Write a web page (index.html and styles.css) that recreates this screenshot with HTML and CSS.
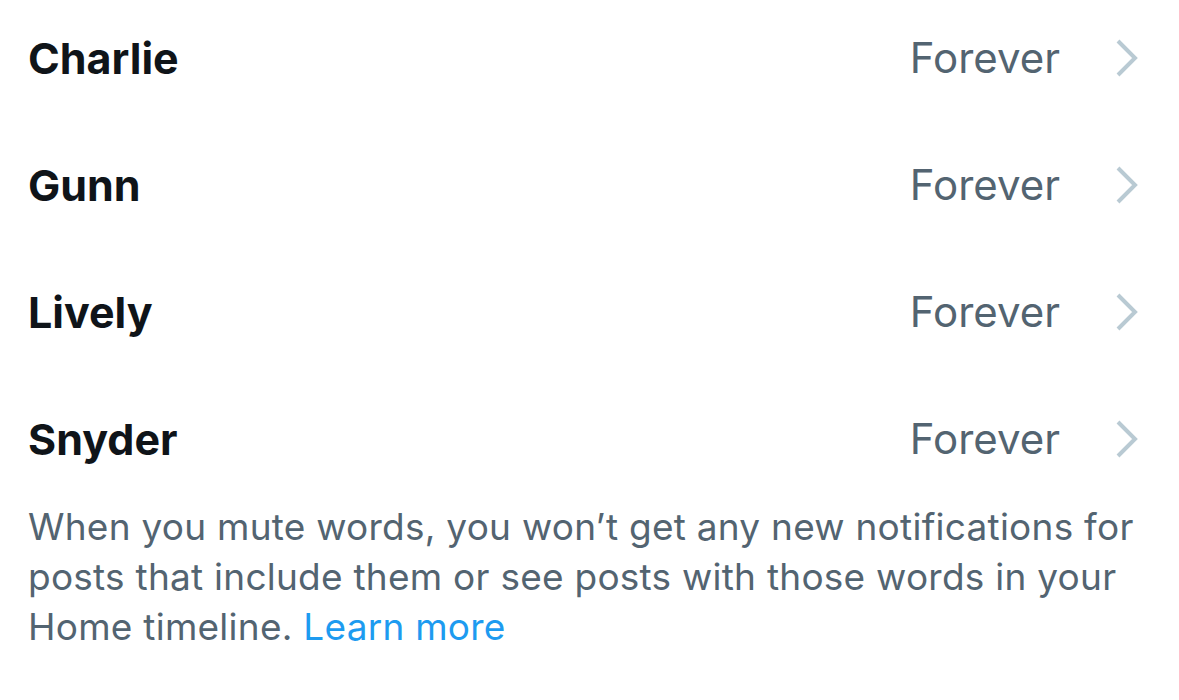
FILE: index.html
```html
<!DOCTYPE html>
<html>
<head>
<meta charset="utf-8">
<link rel="stylesheet" href="styles.css">
</head>
<body>
<div class="page">
  <ul class="list">
    <li class="row"><span class="word">Charlie</span><span class="dur">Forever</span><svg class="chev" viewBox="0 0 24 38" width="24" height="38"><path d="M3 2 L20 19 L3 36" fill="none" stroke="#b9cad3" stroke-width="4"/></svg></li>
    <li class="row"><span class="word">Gunn</span><span class="dur">Forever</span><svg class="chev" viewBox="0 0 24 38" width="24" height="38"><path d="M3 2 L20 19 L3 36" fill="none" stroke="#b9cad3" stroke-width="4"/></svg></li>
    <li class="row"><span class="word">Lively</span><span class="dur">Forever</span><svg class="chev" viewBox="0 0 24 38" width="24" height="38"><path d="M3 2 L20 19 L3 36" fill="none" stroke="#b9cad3" stroke-width="4"/></svg></li>
    <li class="row"><span class="word">Snyder</span><span class="dur">Forever</span><svg class="chev" viewBox="0 0 24 38" width="24" height="38"><path d="M3 2 L20 19 L3 36" fill="none" stroke="#b9cad3" stroke-width="4"/></svg></li>
  </ul>
  <p class="note">When you mute words, you won’t get any new notifications for posts that include them or see posts with those words in your Home timeline. <a class="link" href="#">Learn more</a></p>
</div>
</body>
</html>
```
FILE: styles.css
```css
html, body {
  margin: 0;
  padding: 0;
  background: #ffffff;
}
.page {
  padding: 0 40px 0 28px;
  font-family: Inter, "Noto Sans", sans-serif;
}
.list {
  list-style: none;
  margin: -6px 0 0 0;
  padding: 0;
}
.row {
  display: flex;
  align-items: center;
  height: 127px;
}
.word {
  flex: 1;
  font-size: 43px;
  font-weight: 700;
  color: #0f1419;
}
.dur {
  font-size: 42px;
  color: #536471;
  margin-right: 55px;
}
.chev {
  display: block;
}
.note {
  margin: 0;
  font-size: 37px;
  line-height: 50px;
  letter-spacing: 0.25px;
  color: #536471;
}
.link {
  color: #1d9bf0;
  text-decoration: none;
}
```
